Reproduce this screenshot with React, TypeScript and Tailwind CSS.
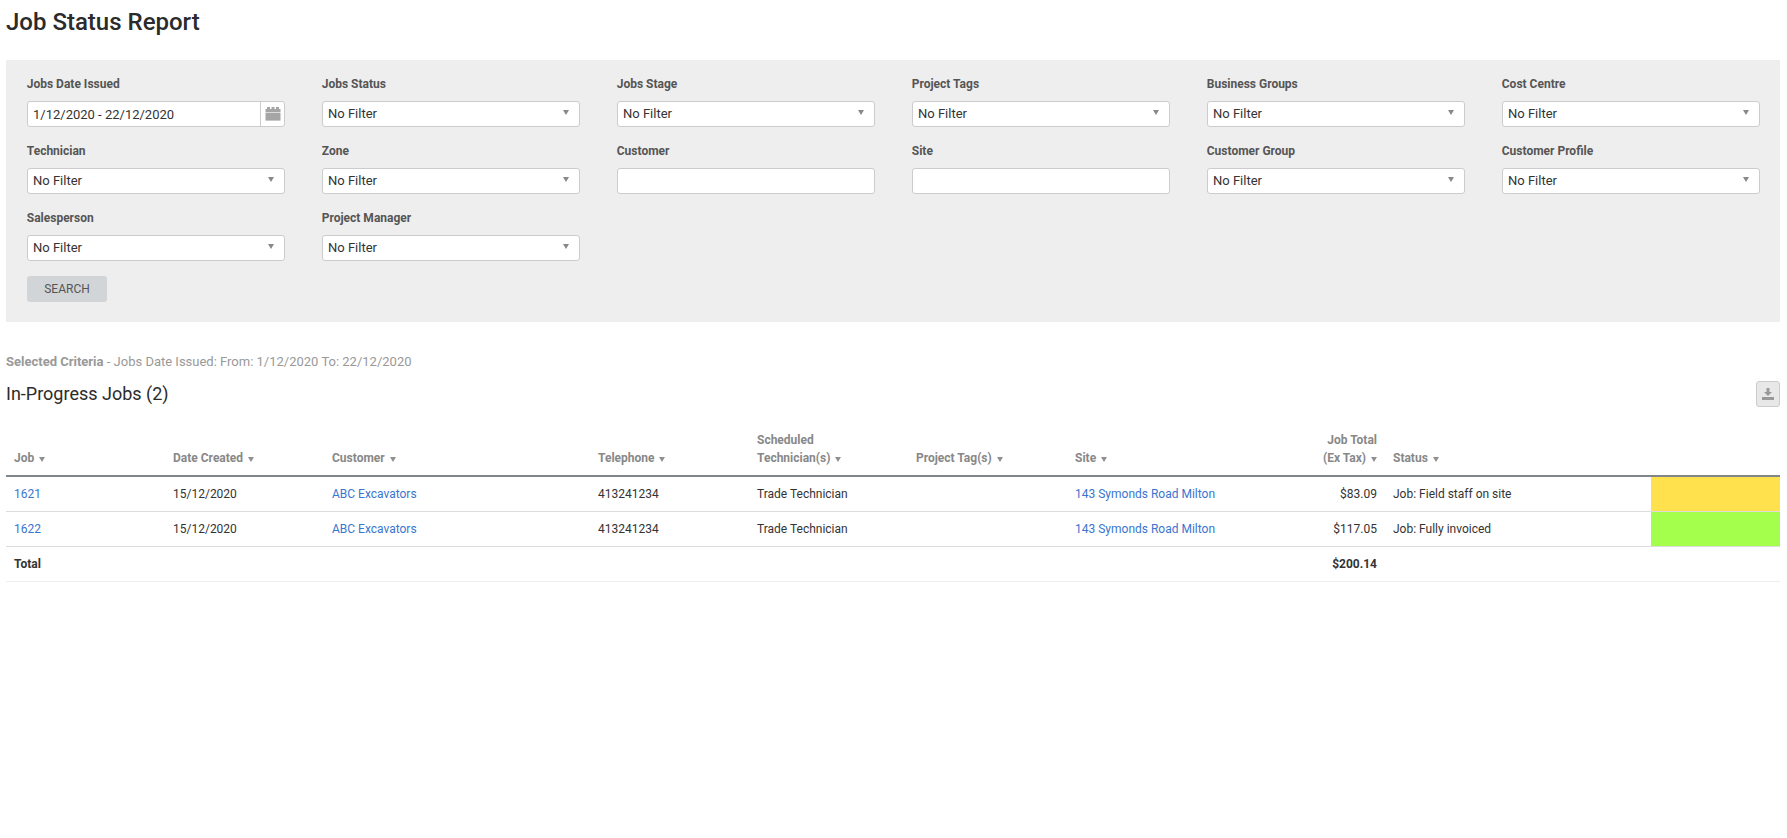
const row1 = ["Jobs Status", "Jobs Stage", "Project Tags", "Business Groups", "Cost Centre"];

const Caret = () => (
  <span className="h-0 w-0 border-x-[3.5px] border-t-[5px] border-x-transparent border-t-[#888]" />
);

const SortArrow = () => (
  <span className="ml-[5px] inline-block h-0 w-0 border-x-[3.5px] border-t-[5px] border-x-transparent border-t-[#909090]" />
);

const Label = ({ text }: { text: string }) => (
  <div className="mb-[8px] -ml-[0.25px] h-[18px] text-[12px] leading-[18px] font-bold text-[#555]">{text}</div>
);

const Select = ({ label }: { label: string }) => (
  <div>
    <Label text={label} />
    <div className="flex h-[26px] items-center justify-between rounded-[3px] border border-[#ccc] bg-white pr-[10px] pl-[5px] text-[13px] text-[#333]">
      <span className="-mt-[1px]">No Filter</span>
      <span className="-mt-[3px] flex">
        <Caret />
      </span>
    </div>
  </div>
);

const TextField = ({ label }: { label: string }) => (
  <div>
    <Label text={label} />
    <div className="h-[26px] rounded-[3px] border border-[#ccc] bg-white" />
  </div>
);

const DateField = () => (
  <div>
    <Label text="Jobs Date Issued" />
    <div className="flex h-[26px] items-center rounded-[3px] border border-[#ccc] bg-white text-[13px] text-[#333]">
      <span className="mt-[1px] flex-1 pl-[5px]">1/12/2020 - 22/12/2020</span>
      <span className="flex h-full w-[24px] items-center justify-center border-l border-[#ccc]">
        <svg width="16" height="14" viewBox="0 0 16 14" fill="#a5a5a5">
          <rect x="2" y="0" width="3" height="3" />
          <rect x="6.5" y="0" width="3" height="3" />
          <rect x="11" y="0" width="3" height="3" />
          <rect x="0.5" y="2" width="15" height="3" />
          <rect x="0.5" y="5.6" width="15" height="8" />
        </svg>
      </span>
    </div>
  </div>
);

const Th = ({ children, right }: { children?: React.ReactNode; right?: boolean }) => (
  <th
    className={`border-b-2 border-[#80868a] px-[8px] pb-[8px] align-bottom text-[12px] leading-[18px] font-bold text-[#888] ${
      right ? "text-right" : "text-left"
    }`}
  >
    {children}
  </th>
);

const Td = ({ children, right, last }: { children?: React.ReactNode; right?: boolean; last?: boolean }) => (
  <td className={`h-[35px] border-b px-[8px] ${last ? "border-[#eee]" : "border-[#ddd]"} ${right ? "text-right" : "text-left"}`}>
    {children}
  </td>
);

const Link = ({ children }: { children: React.ReactNode }) => (
  <a className="text-[#3a75cf]">{children}</a>
);

const jobs = [
  { id: "1621", total: "$83.09", status: "Job: Field staff on site", color: "bg-[#ffe14d]" },
  { id: "1622", total: "$117.05", status: "Job: Fully invoiced", color: "bg-[#a4ff4d]" },
];

export default function App() {
  return (
    <div className="min-h-[838px] bg-white pr-[7px] pl-[6px] font-[Roboto,sans-serif]">
      <h1 className="mb-[16px] h-[44px] text-[24px] leading-[44px] font-medium text-[#2b2b2b]">Job Status Report</h1>

      <div className="h-[262px] bg-[#eee] pt-[15px] pl-[21px]">
        <div className="grid grid-cols-[repeat(6,258px)] gap-x-[37px] gap-y-[15px]">
          <DateField />
          {row1.map((l) => (
            <Select key={l} label={l} />
          ))}
          <Select label="Technician" />
          <Select label="Zone" />
          <TextField label="Customer" />
          <TextField label="Site" />
          <Select label="Customer Group" />
          <Select label="Customer Profile" />
          <Select label="Salesperson" />
          <Select label="Project Manager" />
        </div>
        <button className="mt-[15px] h-[26px] w-[80px] rounded-[3px] bg-[#d1d5d8] text-[12px] text-[#555]">SEARCH</button>
      </div>

      <div className="mt-[31px] h-[18px] text-[13px] leading-[18px] text-[#999]">
        <span className="font-bold">Selected Criteria</span> - Jobs Date Issued: From: 1/12/2020 To: 22/12/2020
      </div>

      <div className="mt-[10px] flex items-start justify-between">
        <div className="mt-[1px] text-[18px] leading-[24px] text-[#2b2b2b]">In-Progress Jobs (2)</div>
        <button className="flex h-[26px] w-[24px] items-center justify-center rounded-[3px] border border-[#ccc] bg-[#e8e8e8]">
          <svg width="14" height="13" viewBox="0 0 14 13" fill="#999">
            <path d="M5.5 0h3v4h2.5L7 8 3 4h2.5z" />
            <rect x="1" y="9" width="12" height="3" />
          </svg>
        </button>
      </div>

      <table className="mt-[24px] w-full table-fixed border-separate border-spacing-0 text-[12px] text-[#333]">
        <colgroup>
          <col className="w-[159px]" />
          <col className="w-[159px]" />
          <col className="w-[266px]" />
          <col className="w-[159px]" />
          <col className="w-[159px]" />
          <col className="w-[159px]" />
          <col className="w-[161px]" />
          <col className="w-[157px]" />
          <col className="w-[266px]" />
          <col className="w-[129px]" />
        </colgroup>
        <thead>
          <tr>
            <Th>Job<SortArrow /></Th>
            <Th>Date Created<SortArrow /></Th>
            <Th>Customer<SortArrow /></Th>
            <Th>Telephone<SortArrow /></Th>
            <Th>Scheduled<br />Technician(s)<SortArrow /></Th>
            <Th>Project Tag(s)<SortArrow /></Th>
            <Th>Site<SortArrow /></Th>
            <Th right>Job Total<br />(Ex Tax)<SortArrow /></Th>
            <Th>Status<SortArrow /></Th>
            <Th />
          </tr>
        </thead>
        <tbody>
          {jobs.map((j) => (
            <tr key={j.id}>
              <Td><Link>{j.id}</Link></Td>
              <Td>15/12/2020</Td>
              <Td><Link>ABC Excavators</Link></Td>
              <Td>413241234</Td>
              <Td>Trade Technician</Td>
              <Td />
              <td className="h-[35px] border-b border-[#ddd] px-[8px] whitespace-nowrap"><Link>143 Symonds Road Milton</Link></td>
              <Td right>{j.total}</Td>
              <Td>{j.status}</Td>
              <td className={`border-b border-[#ddd] ${j.color}`} />
            </tr>
          ))}
          <tr className="font-bold">
            <Td last>Total</Td>
            <Td last />
            <Td last />
            <Td last />
            <Td last />
            <Td last />
            <Td last />
            <Td last right>$200.14</Td>
            <Td last />
            <Td last />
          </tr>
        </tbody>
      </table>
    </div>
  );
}
